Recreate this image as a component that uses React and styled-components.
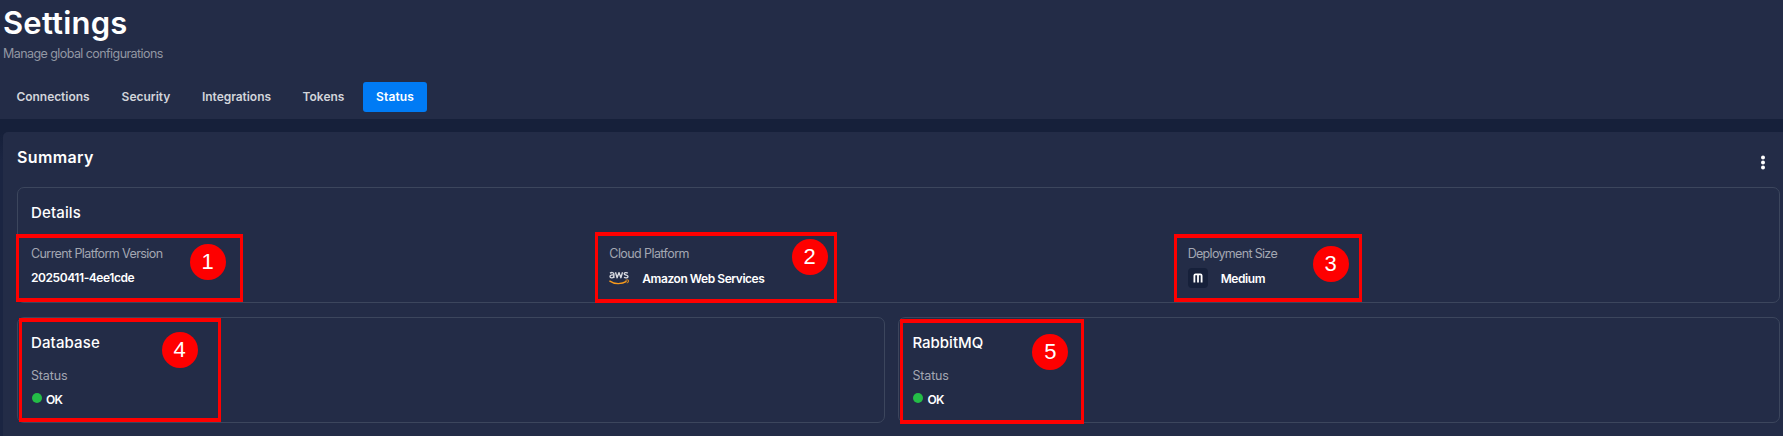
import React from "react";
import styled, { createGlobalStyle } from "styled-components";

const GlobalStyle = createGlobalStyle`
  * { box-sizing: border-box; }
  body {
    margin: 0;
    overflow: hidden;
    background: #16203a;
    font-family: Inter, "Liberation Sans", sans-serif;
    color: #fff;
  }
`;

const Page = styled.div`
  position: relative;
  height: 436px;
  overflow: hidden;
  display: flex;
  flex-direction: column;
  gap: 13px;
  background: linear-gradient(#16203a 132px, #1b2542 160px);
`;

const Header = styled.header`
  height: 119px;
  flex: none;
  background: #232c47;
  padding: 4px 0 0 3px;
`;

const Title = styled.h1`
  margin: 0;
  font-size: 31px;
  line-height: 37px;
  font-weight: 600;
  letter-spacing: 0.2px;
`;

const Subtitle = styled.p`
  margin: 4px 0 0;
  font-size: 12.5px;
  line-height: 18px;
  letter-spacing: -0.57px;
  color: #9297a3;
`;

const Tabs = styled.nav`
  display: flex;
  gap: 6px;
  margin-top: 19px;
`;

const Tab = styled.button`
  width: ${(p) => p.$width}px;
  height: 30px;
  padding: 0;
  border: 0;
  border-radius: 3px;
  font: 600 12px/30px Inter, sans-serif;
  letter-spacing: ${(p) => p.$spacing || 0}px;
  white-space: nowrap;
  color: ${(p) => (p.$active ? "#fff" : "#d2d4da")};
  background: ${(p) => (p.$active ? "#007bf5" : "transparent")};
`;

const Card = styled.main`
  flex: 1;
  margin-left: 3px;
  padding: 14px 3px 12px 14px;
  border-radius: 5px 0 0 0;
  background: #232c47;
`;

const CardHeader = styled.div`
  display: flex;
  justify-content: space-between;
  height: 41px;
`;

const CardTitle = styled.h2`
  margin: 0;
  font-size: 16px;
  line-height: 23px;
  font-weight: 600;
  letter-spacing: 0.35px;
`;

const MenuButton = styled.button`
  width: 10px;
  height: 18px;
  margin: 7px 12.5px 0 0;
  padding: 0;
  border: 0;
  background: none;
  svg { display: block; }
`;

const Panel = styled.section`
  width: ${(p) => (p.$width ? `${p.$width}px` : "auto")};
  height: ${(p) => p.$height}px;
  padding: 14px 13px 0;
  border: 1px solid #3c465d;
  border-radius: 7px;
`;

const PanelTitle = styled.h3`
  margin: 0;
  font-size: 15px;
  line-height: 22px;
  font-weight: 500;
  letter-spacing: ${(p) => p.$spacing || 0}px;
`;

const Columns = styled.div`
  display: grid;
  grid-template-columns: repeat(3, 1fr);
  margin-top: 18px;
`;

const PanelRow = styled.div`
  display: flex;
  justify-content: space-between;
  margin-top: 14px;
`;

const Field = styled.div`
  display: flex;
  flex-direction: column;
  margin-top: ${(p) => p.$top || 0}px;
`;

const Label = styled.span`
  height: 23px;
  font-size: 12.5px;
  line-height: 24px;
  letter-spacing: ${(p) => p.$spacing || 0}px;
  color: #a3a7b2;
`;

const Value = styled.span`
  display: flex;
  align-items: center;
  gap: ${(p) => p.$gap || 0}px;
  height: ${(p) => p.$height || 24}px;
  font-size: 12px;
  font-weight: 600;
  letter-spacing: ${(p) => p.$spacing || 0}px;
`;

const Dot = styled.i`
  width: 10px;
  height: 10px;
  margin: -2px 0 0 1px;
  border-radius: 50%;
  background: #24bd47;
`;

const SizeBadge = styled.i`
  width: 20px;
  height: 20px;
  display: grid;
  place-items: center;
  border-radius: 4px;
  background: #16203a;
`;

const Callout = styled.div`
  position: absolute;
  left: ${(p) => p.$x}px;
  top: ${(p) => p.$y}px;
  width: ${(p) => p.$w}px;
  height: ${(p) => p.$h}px;
  border: solid #fe0000;
  border-width: 4px 3px;
`;

const CalloutNumber = styled.b`
  position: absolute;
  left: ${(p) => p.$x}px;
  top: ${(p) => p.$y}px;
  width: 36px;
  height: 36px;
  border-radius: 50%;
  background: #fe0000;
  font: 400 22px/35px "Liberation Sans", Arial, sans-serif;
  text-align: center;
`;

const AwsLogo = () => (
  <svg width="20" height="20" viewBox="0 0 20 20" fill="none">
    <g stroke="#d8dae0" strokeWidth="1.35" strokeLinejoin="round">
      <path d="M1 5.2C2.2 4.3 4.9 4.1 4.9 6V9.9M4.8 7.1C2.9 6.6 1 7 1 8.5c0 1.8 3 1.8 3.8.1" />
      <path d="M6.5 4.3l1.6 5.4 1.9-5.1 1.9 5.1 1.6-5.4" />
      <path d="M18.8 5.1c-1.2-.8-3.6-.7-3.6.7 0 1.8 3.8.9 3.8 2.7 0 1.7-2.8 1.6-4 .8" />
    </g>
    <path d="M.4 12.9c5.3 3.7 12.3 3.5 17.2.5" stroke="#f79a1b" strokeWidth="1.4" />
    <path d="M16.5 12.3c2.4-.6 3.2-.4 3 .3-.1 1-.5 2-1.2 2.6" stroke="#f79a1b" strokeWidth="1" />
  </svg>
);

const MediumGlyph = () => (
  <svg width="10" height="10" viewBox="0 0 10 10" fill="none" stroke="#fff">
    <path d="M1.4 9.5V2.6Q1.4 1.3 2.6 1.3H7.4Q8.6 1.3 8.6 2.6V9.5M5 1.2V9.5" strokeWidth="1.8" />
  </svg>
);

const tabs = [
  { name: "Connections", width: 100, spacing: -0.05 },
  { name: "Security", width: 74 },
  { name: "Integrations", width: 95, spacing: -0.05 },
  { name: "Tokens", width: 67 },
  { name: "Status", width: 64, spacing: 0.1, active: true },
];

const callouts = [
  { x: 16, y: 234, w: 227, h: 68, cx: 189.5, cy: 244 },
  { x: 595, y: 232, w: 242, h: 71, cx: 791.5, cy: 239 },
  { x: 1174, y: 234, w: 188, h: 68, cx: 1312.5, cy: 246 },
  { x: 19, y: 318, w: 202, h: 104, cx: 161.5, cy: 332 },
  { x: 900, y: 319, w: 184, h: 105, cx: 1032.3, cy: 334 },
];

const ServicePanel = ({ name, width, spacing }) => (
  <Panel $height={106} $width={width}>
    <PanelTitle $spacing={spacing}>{name}</PanelTitle>
    <Field $top={10}>
      <Label $spacing={-0.15}>Status</Label>
      <Value $gap={4} $spacing={-0.7}><Dot />OK</Value>
    </Field>
  </Panel>
);

export default function App() {
  return (
    <Page>
      <GlobalStyle />
      <Header>
        <Title>Settings</Title>
        <Subtitle>Manage global configurations</Subtitle>
        <Tabs>
          {tabs.map((t) => (
            <Tab key={t.name} $width={t.width} $active={t.active} $spacing={t.spacing}>{t.name}</Tab>
          ))}
        </Tabs>
      </Header>
      <Card>
        <CardHeader>
          <CardTitle>Summary</CardTitle>
          <MenuButton aria-label="Menu">
            <svg width="10" height="18" viewBox="0 0 10 18" fill="#fff">
              <circle cx="5" cy="4.5" r="2" />
              <circle cx="5" cy="9.5" r="2" />
              <circle cx="5" cy="14.5" r="2" />
            </svg>
          </MenuButton>
        </CardHeader>
        <Panel $height={116}>
          <PanelTitle $spacing={0.15}>Details</PanelTitle>
          <Columns>
            <Field>
              <Label $spacing={-0.59}>Current Platform Version</Label>
              <Value $spacing={-0.43}>20250411-4ee1cde</Value>
            </Field>
            <Field>
              <Label $spacing={-0.58}>Cloud Platform</Label>
              <Value $height={26} $gap={13} $spacing={-0.45}><AwsLogo />Amazon Web Services</Value>
            </Field>
            <Field>
              <Label $spacing={-0.68}>Deployment Size</Label>
              <Value $height={26} $gap={13} $spacing={-0.4}><SizeBadge><MediumGlyph /></SizeBadge>Medium</Value>
            </Field>
          </Columns>
        </Panel>
        <PanelRow>
          <ServicePanel name="Database" width={868} spacing={0.12} />
          <ServicePanel name="RabbitMQ" width={881.6} />
        </PanelRow>
      </Card>
      {callouts.map((c, i) => (
        <React.Fragment key={i}>
          <Callout $x={c.x} $y={c.y} $w={c.w} $h={c.h} />
          <CalloutNumber $x={c.cx} $y={c.cy}>{i + 1}</CalloutNumber>
        </React.Fragment>
      ))}
    </Page>
  );
}
